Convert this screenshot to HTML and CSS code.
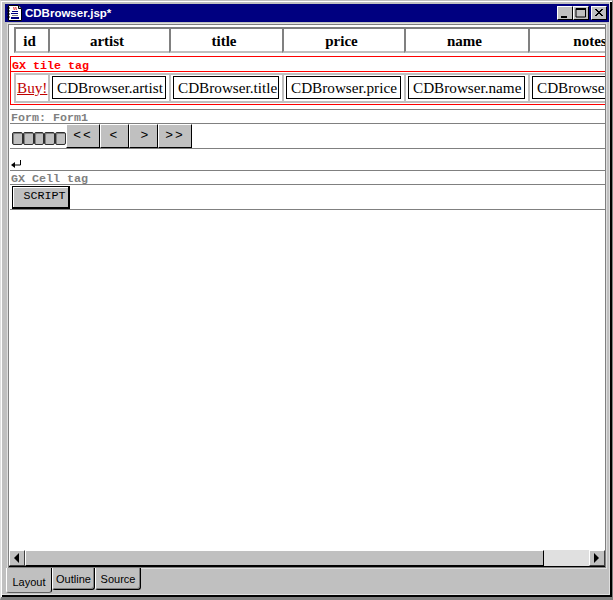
FILE: index.html
```html
<!DOCTYPE html>
<html lang="en">
<head>
<meta charset="utf-8">
<title>CDBrowser.jsp*</title>
<link rel="stylesheet" href="styles.css">
</head>
<body>
<div class="window">
  <div class="titlebar">
    <svg class="appicon" width="16" height="16" viewBox="0 0 16 16">
      <path d="M1.500 0.500h10l3 3v12h-13z" fill="#fff" stroke="#000"/>
      <path d="M11.500 0.500v3h3" fill="#c0c0c0" stroke="#000"/>
      <path d="M0 3h3M0 6h3M0 9h3M0 12h3" stroke="#000"/>
      <path d="M7 2c-1 1 1 2 0 3M9 2c-1 1 1 2 0 3" stroke="#e00000" fill="none"/>
      <path d="M5 6h6v1H5zM4 8h7v1H4z" fill="#000080"/>
      <path d="M5 10h6v1H5z" fill="#808080"/>
      <path d="M4 12h8v2H4z" fill="#000080"/>
    </svg>
    <span class="title">CDBrowser.jsp*</span>
    <div class="winbtns">
      <div class="winbtn"><svg width="14" height="12" viewBox="0 0 14 12"><path d="M3 9h6v2H3z" fill="#000"/></svg></div>
      <div class="winbtn"><svg width="14" height="12" viewBox="0 0 14 12"><path d="M2 1.500h9.500v8.500H2z" fill="none" stroke="#000"/><path d="M2 1h10v2H2z" fill="#000"/></svg></div>
      <div class="winbtn winclose"><svg width="14" height="12" viewBox="0 0 14 12"><path d="M3 2l7 7M4 2l7 7M10 2l-7 7M11 2l-7 7" stroke="#000"/></svg></div>
    </div>
  </div>
  <div class="client">
    <div class="canvas">
      <div class="cols headrow">
        <div class="hcell c-id">id</div>
        <div class="hcell c-artist">artist</div>
        <div class="hcell c-title">title</div>
        <div class="hcell c-price">price</div>
        <div class="hcell c-name">name</div>
        <div class="hcell c-notes">notes</div>
      </div>
      <div class="tiletag">
        <div class="taglabel red">GX tile tag</div>
        <div class="cols datarow">
          <div class="dcell c-id"><a class="buy">Buy!</a></div>
          <div class="dcell c-artist"><span class="field">CDBrowser.artist</span></div>
          <div class="dcell c-title"><span class="field">CDBrowser.title</span></div>
          <div class="dcell c-price"><span class="field">CDBrowser.price</span></div>
          <div class="dcell c-name"><span class="field">CDBrowser.name</span></div>
          <div class="dcell c-notes"><span class="field">CDBrowser.notes</span></div>
        </div>
      </div>
      <div class="section formsec">
        <div class="taglabel gray">Form: Form1</div>
        <div class="formrow">
          <div class="squares">
            <i class="sq"></i><i class="sq"></i><i class="sq"></i><i class="sq"></i><i class="sq"></i>
          </div>
          <div class="navbtn nav-wide">&lt;&lt;</div>
          <div class="navbtn">&lt;</div>
          <div class="navbtn nav-next">&gt;</div>
          <div class="navbtn nav-wide">&gt;&gt;</div>
        </div>
      </div>
      <div class="returnline">
        <svg width="11" height="8" viewBox="0 0 11 8"><path d="M9.500 0v5H2" stroke="#000" fill="none"/><path d="M0 5l4-3v6z" fill="#000"/></svg>
      </div>
      <div class="section cellsec">
        <div class="taglabel gray">GX Cell tag</div>
        <div class="scriptrow"><div class="scriptbtn">SCRIPT</div></div>
      </div>
    </div>
    <div class="hscroll">
      <div class="sbtn"><svg width="6" height="10" viewBox="0 0 6 10"><path d="M5 0v10L0 5z" fill="#000"/></svg></div>
      <div class="thumb"></div>
      <div class="track"></div>
      <div class="sbtn"><svg width="6" height="10" viewBox="0 0 6 10"><path d="M0 0v10l5-5z" fill="#000"/></svg></div>
    </div>
  </div>
  <div class="tabs">
    <div class="tab tab-active">Layout</div>
    <div class="tab tab-outline">Outline</div>
    <div class="tab tab-source">Source</div>
  </div>
</div>
</body>
</html>
```
FILE: styles.css
```css
* { box-sizing: border-box; }
html, body { margin: 0; padding: 0; background: #c0c0c0; }
body { width: 613px; height: 600px; overflow: hidden; }

.window {
  width: 613px;
  height: 600px;
  padding: 4px 5px 3px 5px;
  background: #c0c0c0;
  border-top: 1px solid #c0c0c0;
  border-left: 1px solid #dfdfdf;
  border-right: 1px solid #808080;
  border-bottom: 3px solid #808080;
  box-shadow: inset 1px 1px 0 #fff, inset -2px -2px 0 #000, inset -3px -3px 0 #dfdfdf;
  display: flex;
  flex-direction: column;
}

.titlebar {
  height: 18px;
  margin: -1px -2px 0 -1px;
  flex: none;
  background: #000080;
  display: flex;
  align-items: center;
  padding: 0 2px;
  color: #fff;
}
.appicon { flex: none; }
.title {
  margin-left: 2px;
  font: bold 11.5px/18px "Liberation Sans", Arial, sans-serif;
}
.winbtns { margin-left: auto; display: flex; }
.winbtn {
  width: 16px;
  height: 14px;
  background: #c0c0c0;
  border-top: 1px solid #fff;
  border-left: 1px solid #fff;
  border-right: 1px solid #000;
  border-bottom: 1px solid #000;
  display: flex;
  overflow: hidden;
}
.winclose { margin-left: 2px; }

.client {
  margin: 2px 1px 0 2px;
  height: 544px;
  flex: none;
  background: #fff;
  border: 1px solid #808080;
  box-shadow: 0 0 0 1px #dfdfdf;
  display: flex;
  flex-direction: column;
  overflow: hidden;
}
.canvas {
  flex: 1;
  min-height: 0;
  overflow: hidden;
  padding: 2px 0 0 1px;
}

.cols { display: flex; width: 700px; }
.c-id { width: 34px; }
.c-artist { width: 121px; }
.c-title { width: 113px; }
.c-price { width: 122px; }
.c-name { width: 124px; }
.c-notes { width: 127px; }

.headrow { margin-left: 4px; height: 26px; }
.hcell {
  flex: none;
  height: 26px;
  padding-right: 5px;
  border-left: 2px solid #808080;
  border-top: 2px solid #808080;
  border-bottom: 2px solid #c0c0c0;
  font: bold 15px/24px "Liberation Serif", "Times New Roman", serif;
  color: #000;
  text-align: center;
}

.tiletag {
  margin-top: 3px;
  height: 49px;
  width: 640px;
  border: 1px solid #f00;
}
.taglabel {
  font: bold 11.67px/16px "Liberation Mono", "Courier New", monospace;
  white-space: nowrap;
  padding-left: 1px;
}
.red { color: #f00; border-bottom: 1px solid #f00; height: 15px; line-height: 18px; }
.gray { color: #808080; border-bottom: 1px solid #808080; height: 14px; }

.datarow { margin: 1px 0 0 3px; height: 30px; }
.dcell {
  flex: none;
  height: 30px;
  border: 2px solid #c0c0c0;
  border-right: 0;
  padding: 1px 0 0 2px;
  font: 15.2px/21px "Liberation Serif", "Times New Roman", serif;
  color: #000;
  white-space: nowrap;
}
.dcell.c-notes { width: 130px; }
.buy { display: block; margin-left: -1px; color: #c00000; text-decoration: underline; line-height: 23px; }
.field {
  display: block;
  height: 23px;
  width: calc(100% - 3px);
  border: 1px solid #000;
  padding-left: 4px;
}

.section { border-top: 1px solid #808080; width: 640px; }
.formsec { margin-top: 4px; height: 40px; border-bottom: 1px solid #808080; }
.cellsec { height: 40px; border-bottom: 1px solid #808080; }

.formrow { display: flex; align-items: flex-start; height: 25px; padding-left: 2px; }
.squares { display: flex; margin-top: 8px; width: 54px; }
.sq {
  display: block;
  flex: 1;
  height: 13px;
  background: #c0c0c0;
  border: 1px solid #303030;
  border-radius: 2px;
  box-shadow: inset 1px 1px 0 #808080;
}
.navbtn {
  width: 29px;
  height: 24px;
  background: #c0c0c0;
  border-top: 1px solid #fff;
  border-left: 1px solid #fff;
  border-right: 1px solid #000;
  border-bottom: 1px solid #000;
  text-align: center;
  font: 13px/22px "Liberation Mono", "Courier New", monospace;
  letter-spacing: 2px;
  color: #000;
}
.nav-wide { width: 34px; }
.nav-next { padding-left: 4px; }

.returnline { height: 21px; padding: 11px 0 0 1px; }
.returnline svg { display: block; }

.scriptrow { padding: 1px 0 0 2px; }
.scriptbtn {
  width: 58px;
  height: 23px;
  padding-left: 8px;
  background: #c0c0c0;
  border: 1px solid #000;
  border-right-width: 2px;
  border-bottom-width: 2px;
  box-shadow: inset 1px 1px 0 #fff;
  text-align: center;
  font: 11.67px/19px "Liberation Mono", "Courier New", monospace;
  color: #000;
}

.hscroll {
  flex: none;
  height: 17px;
  display: flex;
  border-bottom: 1px solid #000;
}
.sbtn {
  flex: none;
  width: 16px;
  height: 16px;
  background: #c0c0c0;
  border-top: 1px solid #fff;
  border-left: 1px solid #fff;
  border-right: 1px solid #404040;
  border-bottom: 1px solid #404040;
  display: flex;
  align-items: center;
  justify-content: center;
}
.thumb {
  width: 519px;
  flex: none;
  background: #c0c0c0;
  border-top: 1px solid #fff;
  border-left: 1px solid #fff;
  border-right: 1px solid #000;
  border-bottom: 1px solid #000;
}
.track { flex: 1; background: #e0e0e0; }

.tabs {
  flex: none;
  display: flex;
  align-items: flex-start;
  height: 25px;
}
.tab {
  height: 22px;
  padding: 0;
  text-align: center;
  background: #c0c0c0;
  border-left: 1px solid #fff;
  border-right: 1px solid #000;
  border-bottom: 1px solid #000;
  border-bottom-left-radius: 3px;
  border-bottom-right-radius: 3px;
  box-shadow: inset -1px -1px 0 #808080;
  font: 11px/23px "Liberation Sans", Arial, sans-serif;
  color: #000;
}
.tab-outline { width: 43px; }
.tab-source { width: 46px; }
.tab-active {
  width: 46px;
  height: 25px;
  line-height: 28px;
  box-shadow: none;
  border-bottom: 1px solid #606060;
}
```
